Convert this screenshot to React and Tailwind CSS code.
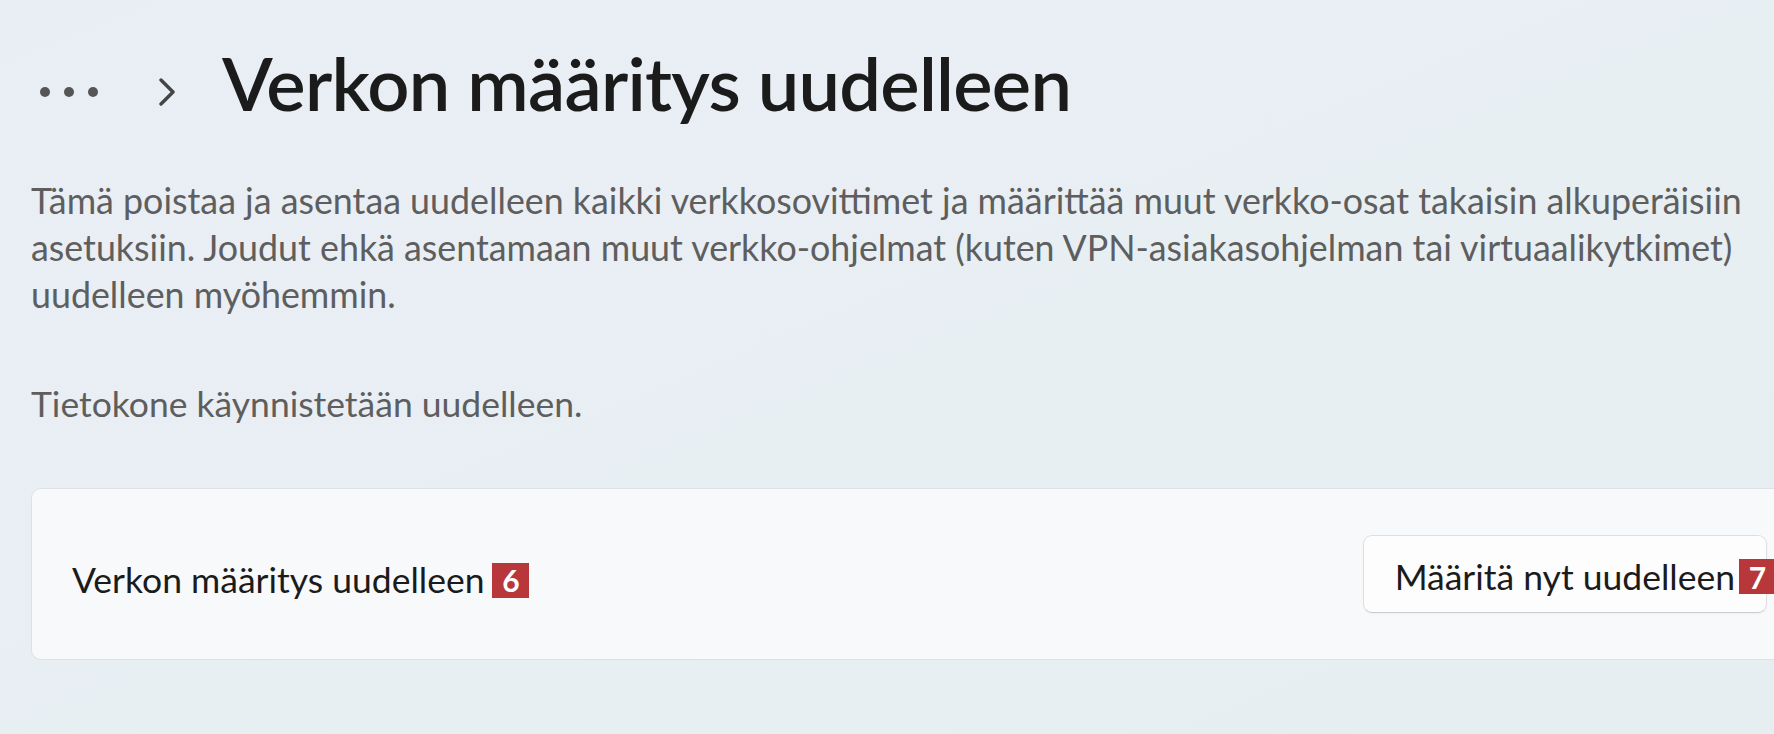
import React from 'react';

const Badge = ({ n, className = '' }) => (
  <span className={`inline-flex items-center justify-center bg-[#b8373a] text-white font-bold text-[30px] leading-none w-[37px] h-[35px] ${className}`}>
    {n}
  </span>
);

const App = () => {
  return (
    <div className="w-[1774px] h-[734px] overflow-hidden bg-gradient-to-br from-[#e9eef5] via-[#e8eff3] to-[#e6eef2] font-['Lato','Open_Sans',sans-serif]">
      {/* Breadcrumb header */}
      <div className="flex items-center pt-[46px] pl-[40px]">
        <div className="flex items-center gap-[14px] mt-[18px]">
          <span className="w-[10px] h-[10px] rounded-full bg-[#555]" />
          <span className="w-[10px] h-[10px] rounded-full bg-[#555]" />
          <span className="w-[10px] h-[10px] rounded-full bg-[#555]" />
        </div>
        <svg className="ml-[60px] mt-[18px]" width="20" height="28" viewBox="0 0 20 28" fill="none">
          <path d="M3 2 L15 14 L3 26" stroke="#454545" strokeWidth="3.4" strokeLinecap="round" strokeLinejoin="round" />
        </svg>
        <h1 className="ml-[44px] text-[74px] leading-none font-semibold text-[#1b1b1b] tracking-[-0.01em]">
          Verkon määritys uudelleen
        </h1>
      </div>

      <div className="pl-[31px]">
        {/* Description */}
        <p className="mt-[57px] text-[35.8px] leading-[47px] text-[#5e5e5e] w-[1740px]">
          Tämä poistaa ja asentaa uudelleen kaikki verkkosovittimet ja määrittää muut verkko-osat takaisin alkuperäisiin asetuksiin. Joudut ehkä asentamaan muut verkko-ohjelmat (kuten VPN-asiakasohjelman tai virtuaalikytkimet) uudelleen myöhemmin.
        </p>
        <p className="mt-[62px] text-[35.5px] leading-[47px] text-[#5e5e5e]">
          Tietokone käynnistetään uudelleen.
        </p>

        {/* Reset card */}
        <div className="mt-[61px] w-[1780px] h-[172px] rounded-[10px] border border-[#dde1e7] bg-[#f8f9fb] flex items-center justify-between pl-[40px] pr-[43px]">
          <div className="flex items-end gap-[8px] pt-[12px]">
            <span className="text-[35.5px] leading-none text-[#1b1b1b]">Verkon määritys uudelleen</span>
            <Badge n="6" />
          </div>
          <button className="h-[78px] rounded-[9px] border border-[#dedfe1] border-b-[#cbccce] bg-[#fdfdfd] flex items-end pb-[18px] pl-[31px] shadow-[0_1px_2px_rgba(0,0,0,0.04)]">
            <span className="text-[35.5px] leading-none text-[#1b1b1b]">Määritä nyt uudelleen</span>
            <Badge n="7" className="ml-[4px] -mr-[10px]" />
          </button>
        </div>
      </div>
    </div>
  );
};

export default App;
